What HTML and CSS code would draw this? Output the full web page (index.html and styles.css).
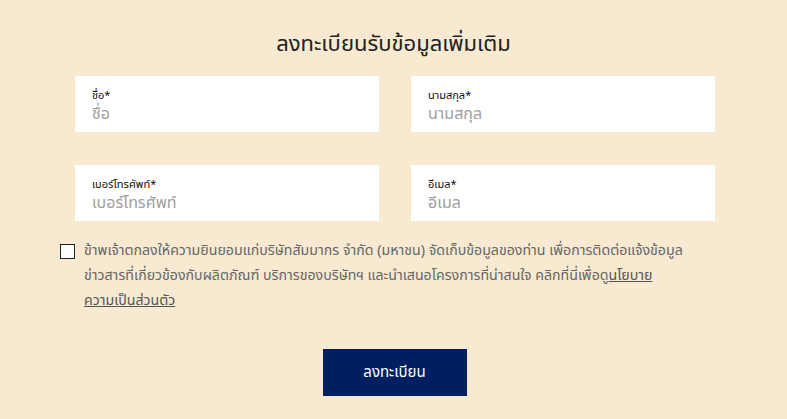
FILE: index.html
```html
<!DOCTYPE html>
<html lang="th">
<head>
<meta charset="utf-8">
<link rel="stylesheet" href="styles.css">
</head>
<body>
<div class="page">
  <h1 class="title">ลงทะเบียนรับข้อมูลเพิ่มเติม</h1>
  <div class="grid">
    <label class="field"><span class="lbl">ชื่อ*</span><input class="inp" placeholder="ชื่อ"></label>
    <label class="field"><span class="lbl">นามสกุล*</span><input class="inp" placeholder="นามสกุล"></label>
    <label class="field"><span class="lbl">เบอร์โทรศัพท์*</span><input class="inp" placeholder="เบอร์โทรศัพท์"></label>
    <label class="field"><span class="lbl">อีเมล*</span><input class="inp" placeholder="อีเมล"></label>
  </div>
  <div class="consent">
    <span class="box"></span>
    <p class="ctext">ข้าพเจ้าตกลงให้ความยินยอมแก่บริษัทสัมมากร จำกัด (มหาชน) จัดเก็บข้อมูลของท่าน เพื่อการติดต่อแจ้งข้อมูล<br>ข่าวสารที่เกี่ยวข้องกับผลิตภัณฑ์ บริการของบริษัทฯ และนำเสนอโครงการที่น่าสนใจ คลิกที่นี่เพื่อดู<a class="link" href="#">นโยบาย<br>ความเป็นส่วนตัว</a></p>
  </div>
  <div class="actions"><button class="btn">ลงทะเบียน</button></div>
</div>
</body>
</html>
```
FILE: styles.css
```css
html, body { margin: 0; padding: 0; }
body {
  background: #f7ead1;
  font-family: "Noto Sans", "Noto Sans Thai", "Noto Sans CJK SC", sans-serif;
  width: 787px;
  height: 419px;
  overflow: hidden;
}
.page { width: 787px; padding-top: 25px; }
.title {
  margin: 0;
  text-align: center;
  font-size: 22px;
  font-weight: 400;
  color: #222;
  line-height: 34px;
}
.grid {
  width: 639px;
  margin: 17px 0 0 75px;
  display: grid;
  grid-template-columns: 304px 304px;
  column-gap: 32px;
  row-gap: 33px;
}
.field {
  background: #fff;
  height: 56px;
  box-sizing: border-box;
  padding: 12px 17px 0;
  display: flex;
  flex-direction: column;
}
.lbl { font-size: 11px; color: #111; line-height: 14px; }
.inp {
  border: 0; outline: 0; padding: 0; margin: 0;
  font-family: inherit; font-size: 16px; line-height: 22px; height: 22px;
  background: transparent; color: #333;
}
.inp::placeholder { color: #a0a0a0; }
.consent {
  display: flex;
  margin: 16px 0 0 60px;
  width: 670px;
  gap: 9px;
}
.box {
  flex: none;
  width: 13px; height: 13px;
  border: 1px solid #222;
  background: #fff;
  margin-top: 7px;
}
.ctext {
  margin: 0;
  font-size: 14.2px;
  line-height: 25px;
  color: #666;
  white-space: nowrap;
}
.link { color: #555; text-decoration: underline; }
.actions { display: flex; justify-content: center; margin-top: 37px; }
.btn {
  width: 144px; height: 47px;
  background: #001f61;
  color: #fff;
  border: 0;
  font-family: inherit;
  font-size: 15px;
  margin-left: 2px;
}
```
